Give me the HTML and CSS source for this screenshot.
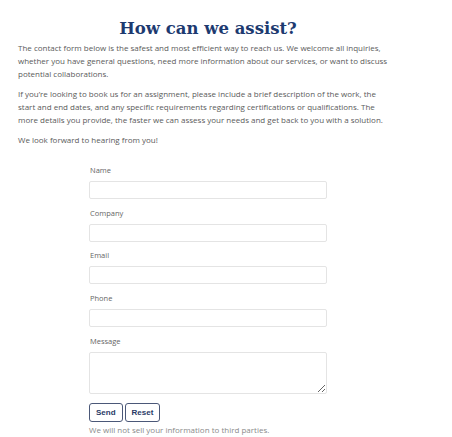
FILE: index.html
```html
<!DOCTYPE html>
<html lang="en">
<head>
<meta charset="utf-8">
<title>How can we assist?</title>
<link rel="stylesheet" href="styles.css">
</head>
<body>
<main class="page">
  <h1 class="title">How can we assist?</h1>
  <p class="text">The contact form below is the safest and most efficient way to reach us. We welcome all inquiries, whether you have general questions, need more information about our services, or want to discuss potential collaborations.</p>
  <p class="text">If you’re looking to book us for an assignment, please include a brief description of the work, the start and end dates, and any specific requirements regarding certifications or qualifications. The more details you provide, the faster we can assess your needs and get back to you with a solution.</p>
  <p class="text">We look forward to hearing from you!</p>

  <form class="form">
    <div class="field">
      <label class="label" for="name">Name</label>
      <input class="input" id="name" type="text">
    </div>
    <div class="field">
      <label class="label" for="company">Company</label>
      <input class="input" id="company" type="text">
    </div>
    <div class="field">
      <label class="label" for="email">Email</label>
      <input class="input" id="email" type="email">
    </div>
    <div class="field">
      <label class="label" for="phone">Phone</label>
      <input class="input" id="phone" type="tel">
    </div>
    <div class="field field-last">
      <label class="label" for="message">Message</label>
      <textarea class="input area" id="message"></textarea>
    </div>
    <div class="actions">
      <button class="btn" type="submit">Send</button>
      <button class="btn" type="reset">Reset</button>
    </div>
    <p class="note">We will not sell your information to third parties.</p>
  </form>
</main>
</body>
</html>
```

FILE: styles.css
```css
html, body {
  margin: 0;
  padding: 0;
  background: #ffffff;
}

.page {
  padding: 18px 0 0 18px;
  width: 380px;
}

.title {
  margin: 0 0 1px 0;
  text-align: center;
  font-family: "DejaVu Serif", serif;
  font-weight: 900;
  font-size: 16.5px;
  line-height: 22px;
  color: #1d3a70;
}

.text {
  margin: 0 0 7px 0;
  width: 376px;
  font-family: "Open Sans", sans-serif;
  font-size: 8px;
  line-height: 13px;
  color: #5a5a5a;
}

.form {
  margin: 19px 0 0 71px;
  width: 238px;
}

.field {
  display: flex;
  flex-direction: column;
  margin-bottom: 8.7px;
}

.field-last {
  margin-bottom: 9.5px;
}

.label {
  font-family: "Open Sans", sans-serif;
  font-size: 7.5px;
  line-height: 10px;
  color: #666666;
  margin: 0 0 6px 1px;
}

.input {
  box-sizing: border-box;
  width: 238px;
  height: 18px;
  margin: 0;
  padding: 2px 4px;
  border: 1px solid #e4e4e4;
  border-radius: 2px;
  background: #ffffff;
  font-family: "Open Sans", sans-serif;
  font-size: 8px;
}

.area {
  height: 42px;
  resize: vertical;
}

.actions {
  display: flex;
  gap: 2px;
}

.btn {
  box-sizing: border-box;
  height: 19px;
  padding: 0 6px;
  border: 1px solid #4b5878;
  border-radius: 3px;
  background: #ffffff;
  font-family: "Liberation Sans", Arial, sans-serif;
  font-weight: 700;
  font-size: 8px;
  color: #2a3a66;
}

.note {
  margin: 3px 0 0 0;
  font-family: "Open Sans", sans-serif;
  font-size: 8px;
  line-height: 10px;
  color: #8a8a8a;
}
```
